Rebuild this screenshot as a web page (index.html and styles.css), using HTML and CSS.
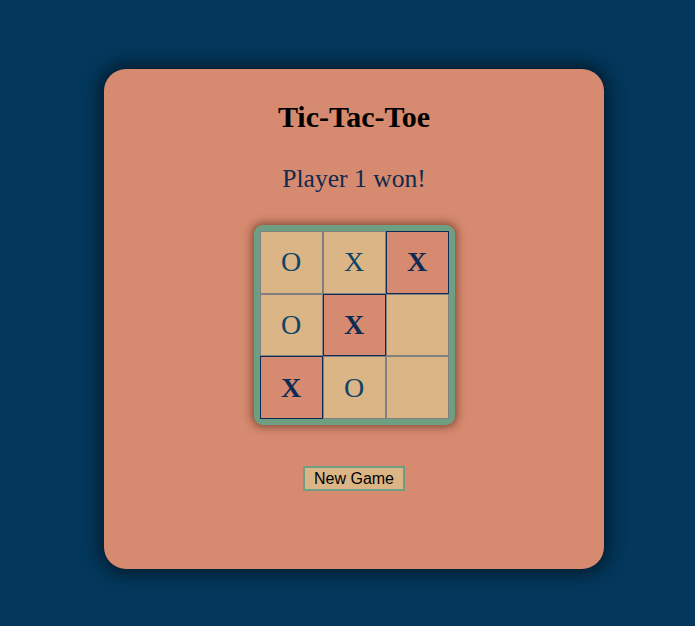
FILE: index.html
```html
<!DOCTYPE html>
<html>
<head>
<meta charset="utf-8">
<link rel="stylesheet" href="styles.css">
</head>
<body>
<div class="card">
  <h1 class="title">Tic-Tac-Toe</h1>
  <p class="status">Player 1 won!</p>
  <div class="board">
    <div class="cell">O</div>
    <div class="cell">X</div>
    <div class="cell win">X</div>
    <div class="cell">O</div>
    <div class="cell win">X</div>
    <div class="cell"></div>
    <div class="cell win">X</div>
    <div class="cell">O</div>
    <div class="cell"></div>
  </div>
  <button class="new-game">New Game</button>
</div>
</body>
</html>
```
FILE: styles.css
```css
html, body {
  margin: 0;
  padding: 0;
  background: #03375b;
  height: 100%;
}
body {
  padding: 69px 0 0 104px;
  box-sizing: border-box;
  font-family: "Liberation Serif", "Times New Roman", serif;
}
.card {
  width: 500px;
  height: 500px;
  box-sizing: border-box;
  background: #d68a6f;
  border-radius: 22px;
  box-shadow: 0 0 18px 4px rgba(0, 0, 0, 0.55);
  display: flex;
  flex-direction: column;
  align-items: center;
  padding-top: 31px;
}
.title {
  margin: 0;
  font-size: 30px;
  font-weight: bold;
  color: #000;
  line-height: 34px;
}
.status {
  margin: 30px 0 0 0;
  font-size: 25.6px;
  line-height: 30px;
  color: #0f2a4e;
}
.board {
  margin-top: 31px;
  padding: 6px;
  background: #6e9f82;
  border-radius: 9px;
  display: grid;
  grid-template-columns: repeat(3, 63px);
  grid-template-rows: repeat(3, 62.67px);
  box-shadow: 0 0 8px 2px rgba(60, 20, 10, 0.55);
}
.cell {
  box-sizing: border-box;
  background: #dbb585;
  border: 1px solid #808080;
  display: flex;
  align-items: center;
  justify-content: center;
  font-size: 28px;
  color: #0d4468;
}
.cell.win {
  background: #d68a6f;
  border-color: #0c2a55;
  color: #0e2a55;
  font-weight: bold;
}
.new-game {
  margin-top: 41px;
  font-family: "Liberation Sans", Arial, sans-serif;
  font-size: 16px;
  padding: 1px 9px;
  background: #dbb585;
  border: 2px solid #6e9f82;
  color: #000;
  line-height: 19px;
}
```
